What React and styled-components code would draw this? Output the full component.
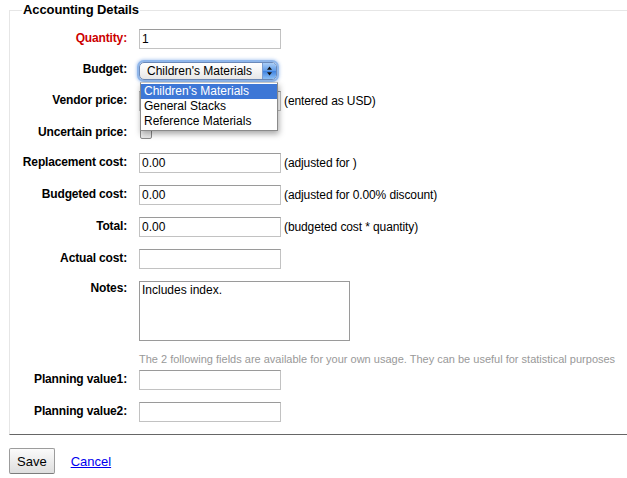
import React from "react";
import styled, { createGlobalStyle } from "styled-components";

const GlobalStyle = createGlobalStyle`
  body {
    margin: 0;
    background: #fff;
    font-family: "Liberation Sans", Arial, sans-serif;
    font-size: 12px;
    color: #000;
  }
`;

const Fieldset = styled.fieldset`
  margin: 2px 0 0 9px;
  padding: 11px 0 0 0;
  border: 0;
  border-top: 1px solid #e6e6e6;
  border-left: 1px solid #e6e6e6;
  border-bottom: 1px solid #666;
  min-width: 0;
`;

const Legend = styled.legend`
  margin-left: 12px;
  padding: 0 1px;
  font-size: 13px;
  font-weight: bold;
  line-height: 16px;
  letter-spacing: -0.1px;
`;

const Row = styled.div`
  display: flex;
  align-items: flex-start;
  margin-bottom: ${p => (p.$gap !== undefined ? p.$gap : 12)}px;
`;

const Label = styled.label`
  width: 117px;
  flex: none;
  margin-right: 12px;
  padding-top: ${p => (p.$top !== undefined ? p.$top : 2)}px;
  text-align: right;
  font-weight: bold;
  line-height: 15px;
  letter-spacing: -0.15px;
  color: ${p => (p.$required ? "#cc0000" : "#000")};
`;

const Control = styled.div`
  display: flex;
  align-items: center;
  position: relative;
`;

const Input = styled.input`
  box-sizing: border-box;
  width: 142px;
  height: 20px;
  margin: 0;
  padding: 0 2px;
  border: 1px solid #c2c2c2;
  border-top-color: #9a9a9a;
  font-family: "Liberation Sans", Arial, sans-serif;
  font-size: 12px;
  color: #000;
  background: #fff;
  outline: none;
`;

const TextArea = styled.textarea`
  box-sizing: border-box;
  width: 211px;
  height: 60px;
  margin: 0;
  padding: 1px 2px;
  border: 1px solid #9a9a9a;
  font-family: "Liberation Sans", Arial, sans-serif;
  font-size: 12px;
  line-height: 14px;
  resize: none;
  outline: none;
`;

const Note = styled.span`
  margin-left: 3px;
  font-size: 12px;
  letter-spacing: -0.1px;
`;

const Hint = styled.div`
  margin: 0 0 4px 129px;
  font-size: 11px;
  line-height: 14px;
  color: #999;
`;

const Select = styled.div`
  box-sizing: border-box;
  width: 138px;
  height: 18px;
  margin-top: 1px;
  display: flex;
  align-items: stretch;
  border: 1px solid #6b89b8;
  border-radius: 5px;
  background: linear-gradient(#ffffff, #f4f4f4 50%, #e6e6e6);
  box-shadow: 0 0 0 2px #8fb6ea, 0 0 3px 3px rgba(110, 160, 230, 0.45);
  overflow: hidden;
`;

const SelectText = styled.span`
  flex: 1;
  padding-left: 7px;
  line-height: 16px;
  font-size: 12px;
`;

const SelectArrow = styled.span`
  width: 13px;
  border-left: 1px solid #7a9bd0;
  background: linear-gradient(#a9cdf7, #5f9be8 50%, #3f82e0 51%, #8dc0f5);
  display: flex;
  align-items: center;
  justify-content: center;
`;

const Menu = styled.ul`
  position: absolute;
  top: 21px;
  left: 1px;
  z-index: 2;
  width: 138px;
  margin: 0;
  padding: 1px 0;
  list-style: none;
  box-sizing: border-box;
  background: #fff;
  border: 1px solid #8a8a8a;
  border-top-color: #c6c6c6;
  box-shadow: 1px 3px 6px rgba(0, 0, 0, 0.35);
`;

const MenuItem = styled.li`
  height: 15px;
  padding-left: 3px;
  line-height: 15px;
  font-size: 12px;
  background: ${p => (p.$active ? "#3d77d6" : "transparent")};
  color: ${p => (p.$active ? "#fff" : "#000")};
`;

const Checkbox = styled.span`
  display: block;
  box-sizing: border-box;
  width: 12px;
  height: 12px;
  margin: 4px 0 0 1px;
  border: 1px solid #8a8a8a;
  border-radius: 2px;
  background: linear-gradient(#ffffff, #e9e9e9);
`;

const Footer = styled.div`
  display: flex;
  align-items: center;
  padding: 13px 0 0 9px;
`;

const Button = styled.button`
  height: 26px;
  padding: 0 7px;
  font-family: "Liberation Sans", Arial, sans-serif;
  font-size: 13px;
  color: #000;
  border: 1px solid #9c9c9c;
  border-bottom-color: #7c7c7c;
  border-radius: 2px;
  background: linear-gradient(#fbfbfb, #dedede);
`;

const Link = styled.a`
  margin-left: 16px;
  font-size: 13px;
  color: #0000ee;
  text-decoration: underline;
`;

const ArrowIcon = () => (
  <svg width="7" height="10" viewBox="0 0 7 10">
    <path d="M3.5 0.5 L6 3.8 H1 Z" fill="#111" />
    <path d="M3.5 9.5 L6 6.2 H1 Z" fill="#111" />
  </svg>
);

const App = () => {
  return (
    <>
      <GlobalStyle />
      <Fieldset>
        <Legend>Accounting Details</Legend>
        <Row>
          <Label $required>Quantity:</Label>
          <Control>
            <Input defaultValue="1" />
          </Control>
        </Row>
        <Row $gap={11}>
          <Label $top={1}>Budget:</Label>
          <Control>
            <Select>
              <SelectText>Children's Materials</SelectText>
              <SelectArrow>
                <ArrowIcon />
              </SelectArrow>
            </Select>
            <Menu>
              <MenuItem $active>Children's Materials</MenuItem>
              <MenuItem>General Stacks</MenuItem>
              <MenuItem>Reference Materials</MenuItem>
            </Menu>
          </Control>
        </Row>
        <Row>
          <Label>Vendor price:</Label>
          <Control>
            <Input />
            <Note>(entered as USD)</Note>
          </Control>
        </Row>
        <Row $gap={13}>
          <Label>Uncertain price:</Label>
          <Control>
            <Checkbox />
          </Control>
        </Row>
        <Row>
          <Label>Replacement cost:</Label>
          <Control>
            <Input defaultValue="0.00" />
            <Note>(adjusted for )</Note>
          </Control>
        </Row>
        <Row>
          <Label>Budgeted cost:</Label>
          <Control>
            <Input defaultValue="0.00" />
            <Note>(adjusted for 0.00% discount)</Note>
          </Control>
        </Row>
        <Row>
          <Label>Total:</Label>
          <Control>
            <Input defaultValue="0.00" />
            <Note>(budgeted cost * quantity)</Note>
          </Control>
        </Row>
        <Row>
          <Label>Actual cost:</Label>
          <Control>
            <Input />
          </Control>
        </Row>
        <Row $gap={11}>
          <Label $top={0}>Notes:</Label>
          <Control>
            <TextArea defaultValue="Includes index." />
          </Control>
        </Row>
        <Hint>
          The 2 following fields are available for your own usage. They can be
          useful for statistical purposes
        </Hint>
        <Row>
          <Label>Planning value1:</Label>
          <Control>
            <Input />
          </Control>
        </Row>
        <Row>
          <Label>Planning value2:</Label>
          <Control>
            <Input />
          </Control>
        </Row>
      </Fieldset>
      <Footer>
        <Button>Save</Button>
        <Link href="#">Cancel</Link>
      </Footer>
    </>
  );
};

export default App;
